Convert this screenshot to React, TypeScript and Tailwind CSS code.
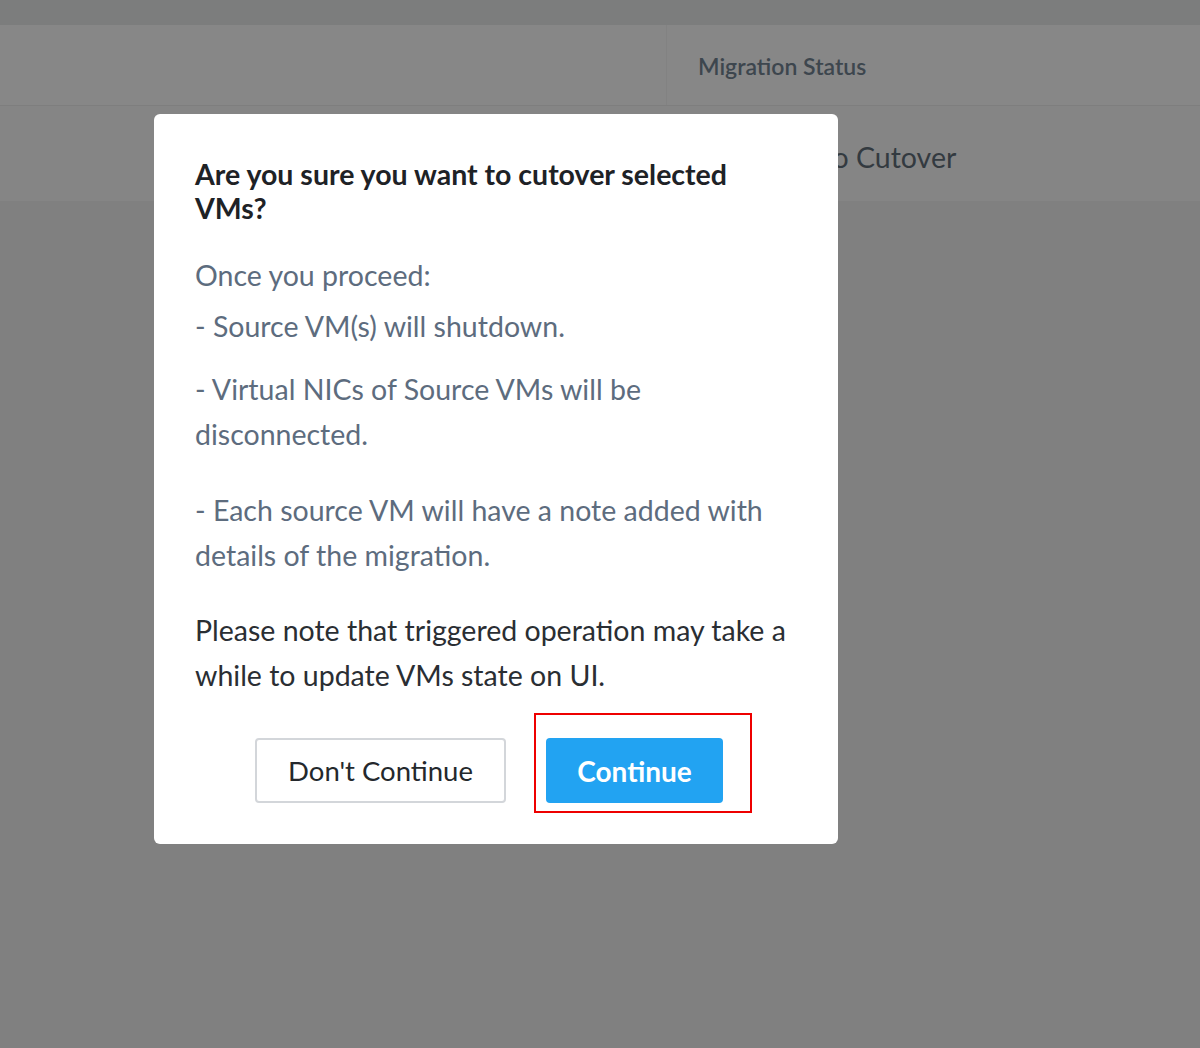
export default function App() {
    return (
        <div className="relative h-[1048px] w-full overflow-hidden bg-[#808080] font-['Lato',sans-serif]">
            {/* Page behind the overlay */}
            <div className="h-[25px] bg-[#7c7d7d]" />
            <div className="flex h-[81px] border-b border-[#7e7e7e] bg-[#878787]">
                <div className="w-[667px] border-r border-[#828282]" />
                <div className="flex items-center pl-[31px] pt-[2px] text-[23px] font-semibold text-[#3d464e]">Migration Status</div>
            </div>
            <div className="flex h-[95px] bg-[#858585]">
                <div className="w-[667px]" />
                <div className="flex items-center pl-[72px] pt-[8px] text-[28.5px] text-[#333a40]">Ready to Cutover</div>
            </div>

            {/* Dialog */}
            <div className="absolute left-[154px] top-[114px] w-[684px] rounded-md bg-white px-[41px] pb-[31px] pt-[43px]">
                <h2 className="pr-[40px] text-[28.5px] font-bold leading-[34px] text-[#1e2226]">
                    Are you sure you want to cutover selected VMs?
                </h2>
                <div className="text-[28.5px] leading-[45px] text-[#5d6c7e]">
                    <p className="mt-[28px]">Once you proceed:</p>
                    <p className="mt-[6px]">- Source VM(s) will shutdown.</p>
                    <p className="mt-[18px]">- Virtual NICs of Source VMs will be disconnected.</p>
                    <p className="mt-[31px]">- Each source VM will have a note added with details of the migration.</p>
                </div>
                <p className="mt-[30px] text-[28.5px] leading-[45px] text-[#2a2e33]">
                    Please note that triggered operation may take a while to update VMs state on UI.
                </p>
                <div className="mt-[15px] flex items-end pl-[60px]">
                    <button className="mb-[10px] h-[65px] w-[251px] rounded border-2 border-[#d3d6da] bg-white text-[27.5px] text-[#24282c]">
                        Don't Continue
                    </button>
                    <div className="ml-[28px] border-2 border-[#ee0000] pb-[8px] pl-[10px] pr-[27px] pt-[23px]">
                        <button className="h-[65px] w-[177px] rounded bg-[#22a3f2] text-[28px] font-bold text-white">
                            Continue
                        </button>
                    </div>
                </div>
            </div>
        </div>
    );
}
